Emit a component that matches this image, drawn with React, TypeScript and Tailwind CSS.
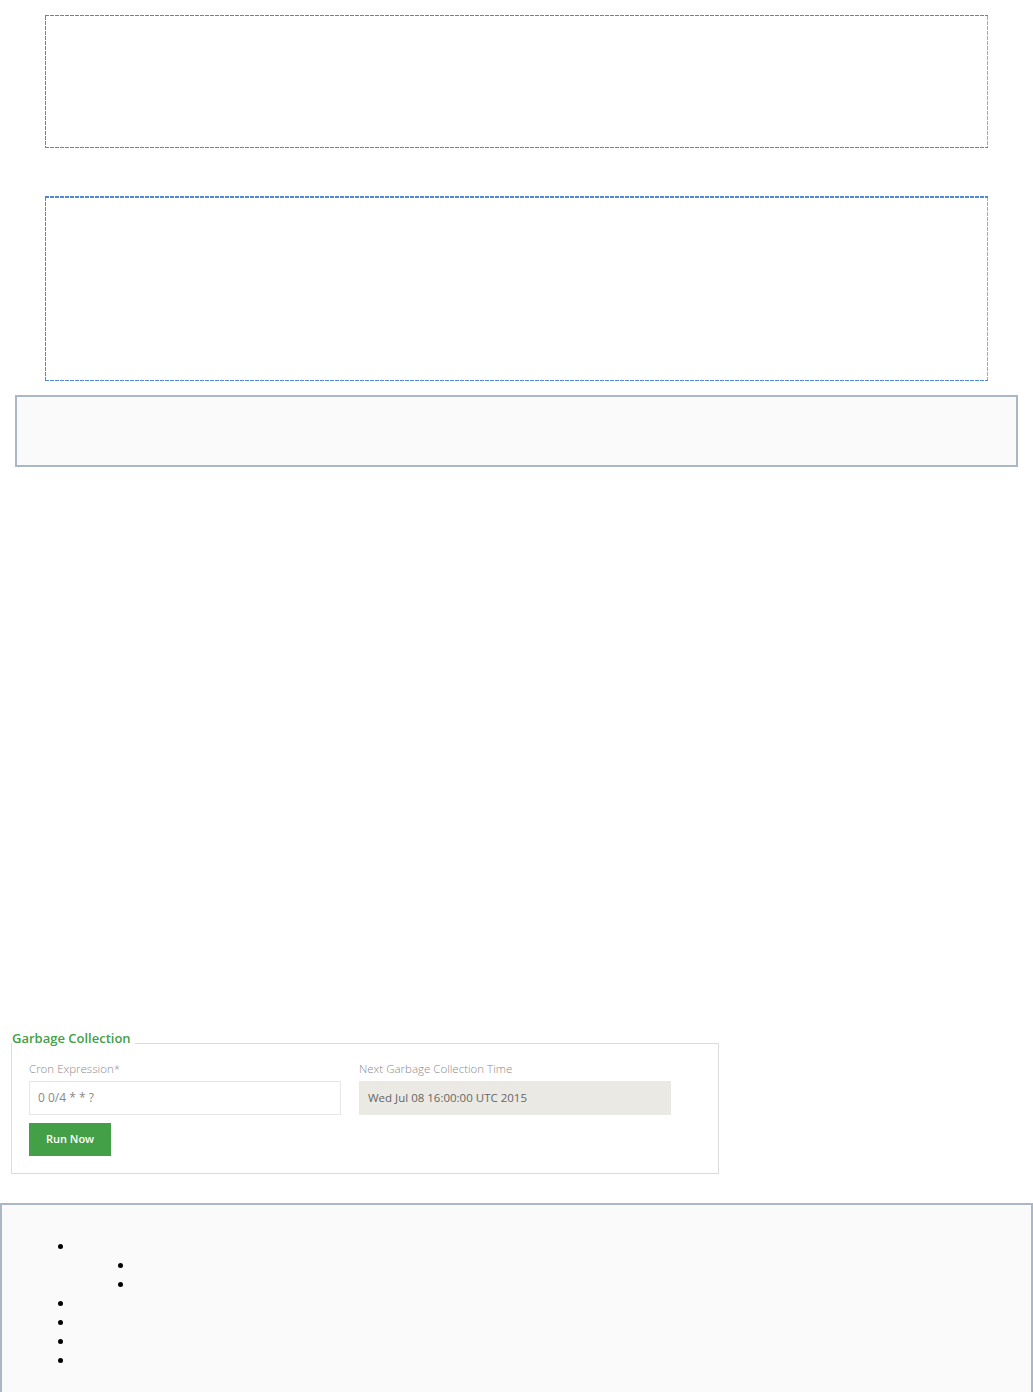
import React from 'react';

const font = { fontFamily: '"Open Sans", "Liberation Sans", sans-serif' };

// dashed frame drawn with gradients so the 1px dashes stay solid blue
const dashed =
    'bg-[linear-gradient(90deg,#4f8ad0_75%,transparent_75%),linear-gradient(90deg,#4f8ad0_75%,transparent_75%),linear-gradient(0deg,#4f8ad0_75%,transparent_75%),linear-gradient(0deg,#aaaaaa_75%,transparent_75%)] ' +
    '[background-position:0_0,0_100%,0_0,100%_0] [background-repeat:repeat-x,repeat-x,repeat-y,repeat-y]';

const App: React.FC = () => {
    return (
        <div className="min-h-[1392px] bg-white pt-[15px]" style={font}>
            {/* placeholder regions */}
            <div className={`mx-[45px] h-[133px] ${dashed} [background-size:5px_1px,5px_1px,1px_5px,1px_5px]`} />
            <div className={`mx-[45px] mt-[48px] h-[185px] ${dashed} [background-size:5px_2px,5px_1px,1px_5px,1px_5px]`} />
            <div className="mx-[15px] mt-[14px] h-[72px] border-2 border-[#aab7c6] bg-[#fafafa]" />

            <div className="h-[562px]" />

            {/* Garbage collection */}
            <fieldset className="ml-[11px] w-[708px] border border-[#dcdcdc] p-0">
                <legend className="pr-[4px] pb-[10px] text-[13px] font-semibold leading-[18px] text-[#43a047]">
                    Garbage Collection
                </legend>
                <div className="px-[17px] pt-[4px] pb-[17px]">
                    <div className="flex gap-[18px]">
                        <div className="w-[312px]">
                            <div className="text-[11.5px] font-light leading-[16px] text-[#8a8a8a]">Cron Expression*</div>
                            <div className="mt-[4px] flex h-[34px] items-center border border-[#e6e6e6] bg-white px-[8px] text-[12px] text-[#888]">
                                0 0/4 * * ?
                            </div>
                        </div>
                        <div className="w-[312px]">
                            <div className="text-[11.5px] font-light leading-[16px] text-[#8a8a8a]">Next Garbage Collection Time</div>
                            <div className="mt-[4px] flex h-[34px] items-center bg-[#eae9e4] px-[9px] text-[11.5px] text-[#666]">
                                Wed Jul 08 16:00:00 UTC 2015
                            </div>
                        </div>
                    </div>
                    <button className="mt-[8px] h-[33px] w-[82px] bg-[#43a047] text-[11px] font-semibold text-white">
                        Run Now
                    </button>
                </div>
            </fieldset>

            {/* bottom panel */}
            <div className="mt-[29px] h-[200px] border-2 border-b-0 border-[#aab7c6] bg-[#fafafa] pt-[32px]">
                <ul className="list-disc pl-[72px] text-[13px] leading-[19px]">
                    <li>&nbsp;
                        <ul className="list-disc pl-[60px]">
                            <li>&nbsp;</li>
                            <li>&nbsp;</li>
                        </ul>
                    </li>
                    <li>&nbsp;</li>
                    <li>&nbsp;</li>
                    <li>&nbsp;</li>
                    <li>&nbsp;</li>
                </ul>
            </div>
        </div>
    );
};

export default App;
